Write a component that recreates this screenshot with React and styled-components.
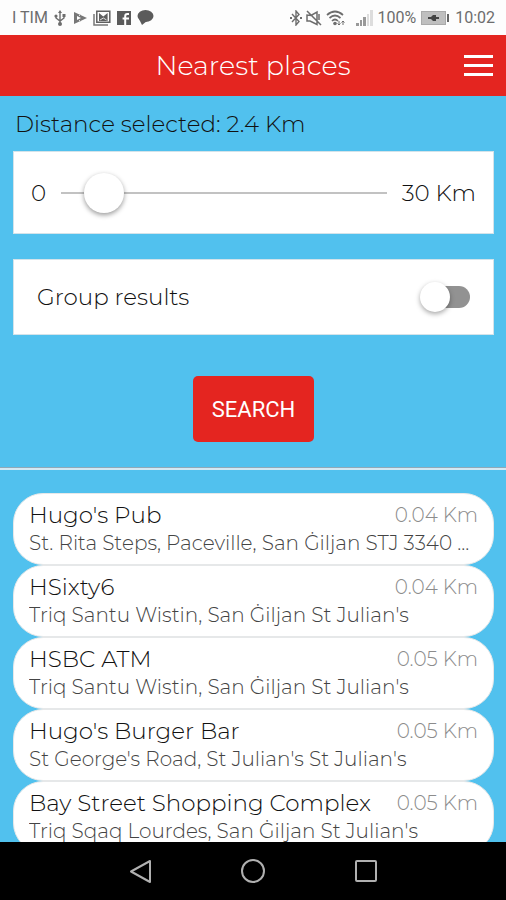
import React, { useState } from "react";
import styled, { createGlobalStyle } from "styled-components";

const GlobalStyle = createGlobalStyle`
* {
  box-sizing: border-box;
}
body {
  margin: 0;
  font-family: Montserrat, Inter, sans-serif;
  font-weight: 300;
  color: #111;
}
`
const Screen = styled.div`
height: 100vh;
display: flex;
flex-direction: column;
background-color: #51c1ee;
`
const StatusBar = styled.div`
height: 35px;
flex: none;
display: flex;
align-items: center;
justify-content: space-between;
padding: 0 11px 0 12px;
background-color: #fdfdfd;
color: #6d6d6d;
font-family: Roboto, sans-serif;
font-size: 16px;
font-weight: 400;
`
const StatusGroup = styled.div`
display: flex;
align-items: center;
gap: ${({ $gap }) => $gap}px;

svg {
  display: block;
}
`
const Header = styled.header`
height: 61px;
flex: none;
display: grid;
grid-template-columns: 42px 1fr 42px;
align-items: center;
background-color: #e42520;
color: #fff;
`
const Title = styled.h1`
grid-column: 2;
margin: 0;
text-align: center;
font-size: 27px;
font-weight: 300;
line-height: 32px;
`
const MenuButton = styled.button`
display: flex;
flex-direction: column;
gap: 6px;
padding: 0;
border: none;
background: none;
cursor: pointer;
`
const MenuLine = styled.span`
width: 29px;
height: 3px;
background-color: #fff;
`
const Content = styled.main`
flex: 1;
min-height: 0;
overflow-y: auto;
scrollbar-width: none;
`
const Form = styled.form`
display: flex;
flex-direction: column;
padding: 12px 12px 25px 13px;
`
const DistanceLabel = styled.label`
padding: 0 2px;
margin-bottom: 11px;
font-size: 23px;
line-height: 32px;
`
const Panel = styled.div`
display: flex;
align-items: center;
justify-content: space-between;
gap: 15px;
height: ${({ $height }) => $height}px;
padding: ${({ $padding }) => $padding};
margin-bottom: 25px;
background-color: #fff;
border: 1px solid #d3e3ea;
font-size: 23px;
`
const Slider = styled.input`
flex: 1;
min-width: 0;
height: 40px;
margin: 0;
appearance: none;
background: none;
cursor: pointer;

&::-webkit-slider-runnable-track {
  height: 2px;
  background-color: #c2c2c2;
}
&::-webkit-slider-thumb {
  appearance: none;
  width: 40px;
  height: 40px;
  margin-top: -19px;
  border-radius: 50%;
  background-color: #fff;
  box-shadow: 0 2px 5px rgba(0, 0, 0, 0.4);
}
`
const Switch = styled.input`
position: relative;
width: 42px;
height: 22px;
margin: 0;
appearance: none;
border-radius: 11px;
background-color: #929292;
cursor: pointer;

&::before {
  content: "";
  position: absolute;
  top: -4px;
  left: -8px;
  width: 30px;
  height: 30px;
  border-radius: 50%;
  background-color: #fff;
  box-shadow: 0 2px 5px rgba(0, 0, 0, 0.35);
}
&:checked {
  background-color: #e42520;
}
&:checked::before {
  left: 20px;
}
`
const SearchButton = styled.button`
align-self: center;
margin-top: 16px;
height: 66px;
padding: 0 19px;
border: none;
border-radius: 5px;
background-color: #e42520;
color: #fff;
font-family: Roboto, sans-serif;
font-size: 22px;
font-weight: 400;
cursor: pointer;
`
const Divider = styled.hr`
margin: 0;
border: none;
border-top: 1px solid #8fa9b8;
border-bottom: 2px solid #d3e9f4;
`
const PlaceList = styled.ul`
list-style: none;
margin: 0;
padding: 23px 12px 23px 13px;
`
const Place = styled.li`
height: 72px;
display: grid;
grid-template-columns: 1fr auto;
grid-template-rows: 32px 24px;
column-gap: 10px;
align-items: center;
padding: 5px 15px;
border: 1px solid #e6e8e9;
border-radius: 30px;
background-color: #fff;
`
const PlaceName = styled.span`
font-size: 23px;
`
const PlaceDistance = styled.span`
color: #8c8c8c;
font-size: 20px;
`
const PlaceAddress = styled.span`
grid-column: 1 / -1;
overflow: hidden;
white-space: nowrap;
text-overflow: ellipsis;
color: #444;
font-size: 20px;
`
const NavBar = styled.nav`
height: 58px;
flex: none;
display: flex;
align-items: center;
justify-content: center;
gap: 88px;
background-color: #000;
`
const NavButton = styled.button`
display: flex;
padding: 0;
border: none;
background: none;
cursor: pointer;
`

const UsbIcon = () => (
  <svg width="12" height="16" viewBox="0 0 12 16" fill="none" stroke="#6d6d6d" strokeWidth="1.4">
    <path d="M6 2v11M2 6v2l4 3 4-3V6" />
    <path d="M6 0l2 3H4z" fill="#6d6d6d" stroke="none" />
    <circle cx="6" cy="14" r="2" fill="#6d6d6d" stroke="none" />
    <circle cx="2" cy="6" r="1.6" fill="#6d6d6d" stroke="none" />
    <path d="M8.5 4h3v3h-3z" fill="#6d6d6d" stroke="none" />
  </svg>
)
const PlayIcon = () => (
  <svg width="15" height="14" viewBox="0 0 15 14">
    <path d="M2 1l13 6-13 6z" fill="#777" />
    <path d="M5 5l4 2-4 2z" fill="#fff" />
    <path d="M9 3l-2 2M9 11l-2-2" stroke="#ddd" />
  </svg>
)
const MailIcon = () => (
  <svg width="18" height="16" viewBox="0 0 18 16" fill="none">
    <path d="M1 4v11h14" stroke="#777" strokeWidth="1.5" />
    <path d="M3.8 1.2h13v11h-13z" stroke="#606060" strokeWidth="1.5" />
    <path d="M6 11V3l4.3 3.5L14.6 3v8z" fill="#606060" />
    <path d="M7 10l3.3-2 3.3 2" stroke="#ddd" />
  </svg>
)
const FacebookIcon = () => (
  <svg width="14" height="14" viewBox="0 0 14 14">
    <path d="M0 0h14v14H0z" fill="#5b5b5b" />
    <path d="M8.2 14V5.2c0-1.6.8-2.3 2.2-2.3H12M5.6 7.5H12" fill="none" stroke="#fff" strokeWidth="2" />
  </svg>
)
const ChatIcon = () => (
  <svg width="17" height="15" viewBox="0 0 17 15" fill="#5b5b5b">
    <ellipse cx="8.5" cy="6" rx="8" ry="6" />
    <path d="M2 9l3 6 5-4z" />
  </svg>
)
const BluetoothIcon = () => (
  <svg width="12" height="16" viewBox="0 0 12 16" fill="none" stroke="#6d6d6d" strokeWidth="1.4">
    <path d="M2 4l7 7.5L6 15V1l3 3.5L2 12" />
    <path d="M0 8h2M10 8h2" strokeWidth="2" />
  </svg>
)
const MuteIcon = () => (
  <svg width="16" height="16" viewBox="0 0 16 16" fill="none" stroke="#6d6d6d" strokeWidth="1.5">
    <path d="M1 5v6h3l7 3.5V2L5 5.5zM1 1l14 14" />
    <path d="M13 4v6" />
  </svg>
)
const WifiIcon = () => (
  <svg width="19" height="16" viewBox="0 0 19 16" fill="none" stroke="#6d6d6d" strokeWidth="1.7">
    <path d="M1 5q8-7 16 0M3.5 8q5.5-5 11 0M6 11q3-3 6 0" />
    <circle cx="9" cy="13.5" r="1.8" fill="#6d6d6d" stroke="none" />
    <path d="M13 11v4M11.5 13.5L13 15l1.5-1.5M17 15v-4M15.5 12.5L17 11l1.5 1.5" strokeWidth="1" />
  </svg>
)
const SignalIcon = () => (
  <svg width="24" height="16" viewBox="0 0 24 16">
    <path d="M7 13h3v3H7zM11 10h2v6h-2zM14 7h3v9h-3z" fill="#999" />
    <path d="M18 4h2v12h-2zM21 0h3v16h-3z" fill="#ddd" />
  </svg>
)
const BatteryIcon = () => (
  <svg width="31" height="14" viewBox="0 0 31 14">
    <path d="M1 0h25v14H1z" fill="#aaa" />
    <path d="M2 1h23v12H2z" fill="#bfbfbf" />
    <path d="M27 3h2v8h-2z" fill="#666" />
    <path d="M8 6h3l2-2h3v2h3v2h-3v2h-3l-2-2H8z" fill="#444" />
  </svg>
)

const places = [
  { name: "Hugo's Pub", address: "St. Rita Steps, Paceville, San Ġiljan STJ 3340 ...", distance: "0.04 Km" },
  { name: "HSixty6", address: "Triq Santu Wistin, San Ġiljan St Julian's", distance: "0.04 Km" },
  { name: "HSBC ATM", address: "Triq Santu Wistin, San Ġiljan St Julian's", distance: "0.05 Km" },
  { name: "Hugo's Burger Bar", address: "St George's Road, St Julian's St Julian's", distance: "0.05 Km" },
  { name: "Bay Street Shopping Complex", address: "Triq Sqaq Lourdes, San Ġiljan St Julian's", distance: "0.05 Km" },
]

const handleSubmit = (e) => {
  e.preventDefault()
}

const App = () => {
  const [distance, setDistance] = useState(2.4)
  const [grouped, setGrouped] = useState(false)

  return (
    <Screen>
      <GlobalStyle />
      <StatusBar>
        <StatusGroup $gap={6}>
          <span>I TIM</span>
          <UsbIcon />
          <PlayIcon />
          <MailIcon />
          <FacebookIcon />
          <ChatIcon />
        </StatusGroup>
        <StatusGroup $gap={4}>
          <BluetoothIcon />
          <MuteIcon />
          <WifiIcon />
          <SignalIcon />
          <span>100%</span>
          <BatteryIcon />
          <span>10:02</span>
        </StatusGroup>
      </StatusBar>
      <Header>
        <Title>Nearest places</Title>
        <MenuButton type="button" aria-label="Menu">
          <MenuLine />
          <MenuLine />
          <MenuLine />
        </MenuButton>
      </Header>
      <Content>
        <Form onSubmit={handleSubmit}>
          <DistanceLabel htmlFor="distance">Distance selected: {distance} Km</DistanceLabel>
          <Panel $height={83} $padding="0 17px">
            <span>0</span>
            <Slider
              id="distance"
              type="range"
              min="0"
              max="30"
              step="0.1"
              value={distance}
              onChange={(e) => setDistance(Number(e.target.value))}
            />
            <span>30 Km</span>
          </Panel>
          <Panel $height={76} $padding="0 23px">
            <label htmlFor="group">Group results</label>
            <Switch
              id="group"
              type="checkbox"
              checked={grouped}
              onChange={(e) => setGrouped(e.target.checked)}
            />
          </Panel>
          <SearchButton type="submit">SEARCH</SearchButton>
        </Form>
        <Divider />
        <PlaceList>
          {places.map((place) => (
            <Place key={place.name}>
              <PlaceName>{place.name}</PlaceName>
              <PlaceDistance>{place.distance}</PlaceDistance>
              <PlaceAddress>{place.address}</PlaceAddress>
            </Place>
          ))}
        </PlaceList>
      </Content>
      <NavBar>
        <NavButton type="button" aria-label="Back">
          <svg width="24" height="26" viewBox="0 0 24 26" fill="none" stroke="#b0b0b0" strokeWidth="2">
            <path d="M22 3v21L3 13.5z" strokeLinejoin="round" />
          </svg>
        </NavButton>
        <NavButton type="button" aria-label="Home">
          <svg width="26" height="26" viewBox="0 0 26 26" fill="none" stroke="#b0b0b0" strokeWidth="2">
            <circle cx="13" cy="13" r="11" />
          </svg>
        </NavButton>
        <NavButton type="button" aria-label="Recent apps">
          <svg width="24" height="26" viewBox="0 0 24 26" fill="none" stroke="#b0b0b0" strokeWidth="2">
            <rect x="2" y="3" width="20" height="20" rx="1" />
          </svg>
        </NavButton>
      </NavBar>
    </Screen>
  )
}

export default App
